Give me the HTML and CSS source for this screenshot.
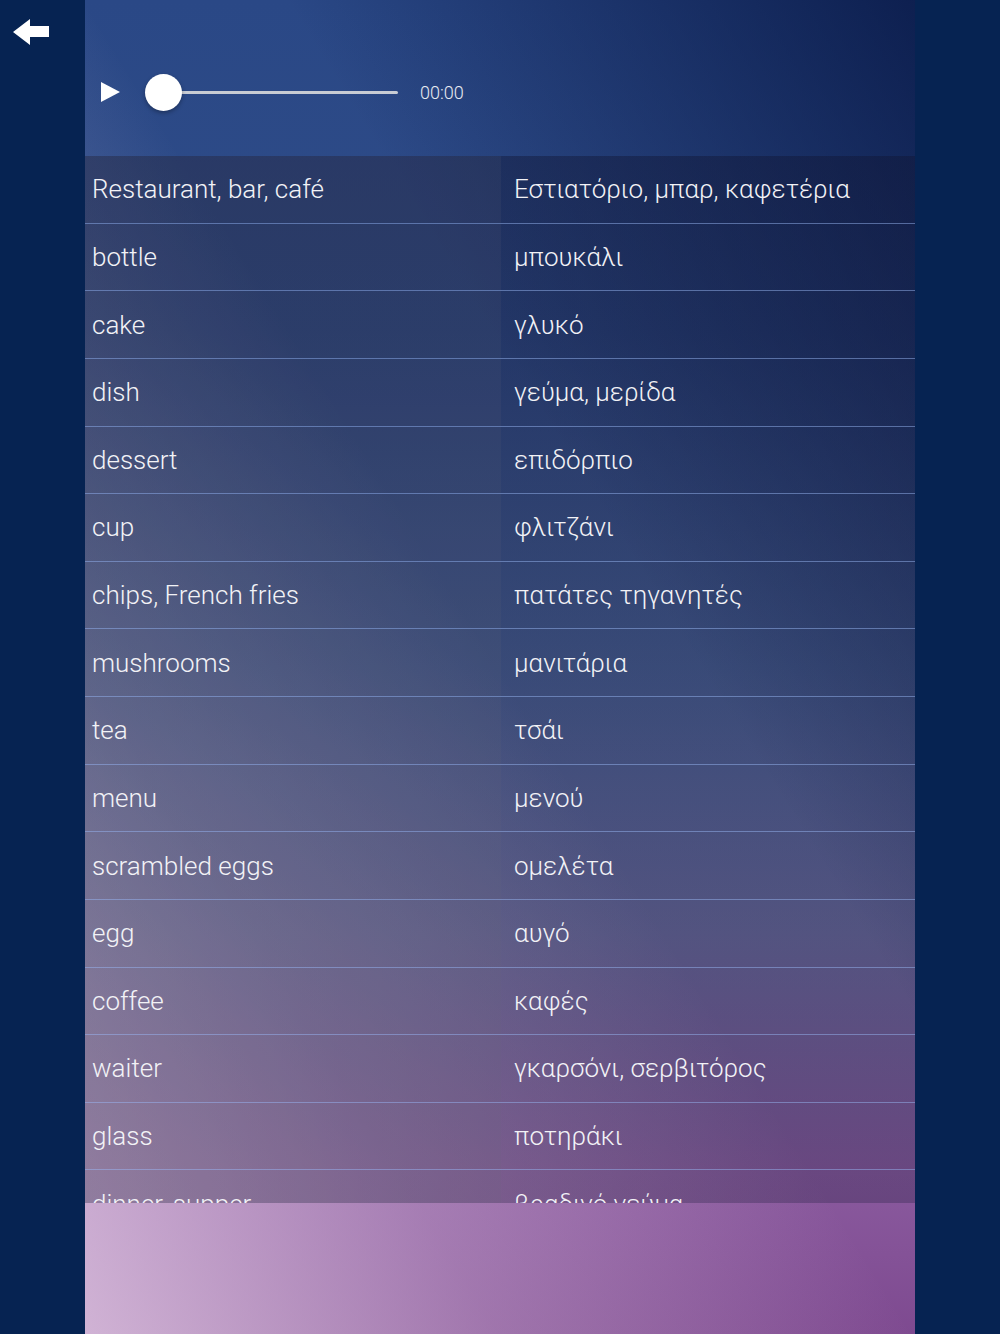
FILE: index.html
```html
<!DOCTYPE html>
<html lang="el">
  <head>
    <meta charset="UTF-8" />
    <meta name="viewport" content="width=device-width, initial-scale=1.0" />
    <title>Restaurant, bar, café</title>
    <link rel="stylesheet" href="styles.css">
  </head>
  <body>
    <aside class="side side-left">
      <!-- back button -->
      <a class="back" href="#">
        <svg width="38" height="28" viewBox="0 0 38 28">
          <polygon points="0,13 17,0 17,7 36,7 36,18 17,18 17,26" fill="#fff" />
        </svg>
      </a>
    </aside>
    <main class="panel">
      <header class="player">
        <span class="play"></span>
        <div class="track">
          <span class="knob"></span>
        </div>
        <span class="time">00:00</span>
      </header>
      <div class="words">
        <ul class="list">
          <li><p>Restaurant, bar, café</p><p>Εστιατόριο, μπαρ, καφετέρια</p></li>
          <li><p>bottle</p><p>μπουκάλι</p></li>
          <li><p>cake</p><p>γλυκό</p></li>
          <li><p>dish</p><p>γεύμα, μερίδα</p></li>
          <li><p>dessert</p><p>επιδόρπιο</p></li>
          <li><p>cup</p><p>φλιτζάνι</p></li>
          <li><p>chips, French fries</p><p>πατάτες τηγανητές</p></li>
          <li><p>mushrooms</p><p>μανιτάρια</p></li>
          <li><p>tea</p><p>τσάι</p></li>
          <li><p>menu</p><p>μενού</p></li>
          <li><p>scrambled eggs</p><p>ομελέτα</p></li>
          <li><p>egg</p><p>αυγό</p></li>
          <li><p>coffee</p><p>καφές</p></li>
          <li><p>waiter</p><p>γκαρσόνι, σερβιτόρος</p></li>
          <li><p>glass</p><p>ποτηράκι</p></li>
          <li><p>dinner, supper</p><p>βραδινό γεύμα</p></li>
        </ul>
      </div>
      <footer class="foot"></footer>
    </main>
    <aside class="side"></aside>
  </body>
</html>
```

FILE: styles.css
```css
html,
body {
  margin: 0;
  padding: 0;
  height: 100%;
}
body {
  display: flex;
  background: #062352;
  font-family: "Roboto", "Liberation Sans", "DejaVu Sans", sans-serif;
  color: #f2f2f6;
  overflow: hidden;
}
.side {
  width: 85px;
  flex-shrink: 0;
  background: #062352;
}
.back {
  display: block;
  padding: 19px 0 0 13px;
}
.panel {
  flex: 1;
  height: 1334px;
  display: flex;
  flex-direction: column;
  background:
    linear-gradient(to bottom left, rgba(4, 18, 62, 0.75) 0%, rgba(4, 18, 62, 0) 38%),
    linear-gradient(to top right, rgba(236, 214, 236, 0.75) 0%, rgba(236, 214, 236, 0.3) 25%, rgba(236, 214, 236, 0) 50%),
    linear-gradient(180deg, #2a4886 0%, #2f4c88 25%, #4a6296 50%, #6c6c9e 70%, #8a5a9e 88%, #7e4a90 100%);
}
/* audio player */
.player {
  height: 156px;
  flex-shrink: 0;
  box-sizing: border-box;
  display: flex;
  align-items: center;
  padding: 28px 0 0 16px;
}
.play {
  width: 0;
  height: 0;
  border-top: 10.5px solid transparent;
  border-bottom: 10.5px solid transparent;
  border-left: 19px solid #fff;
}
.track {
  position: relative;
  width: 235px;
  height: 3px;
  margin-left: 43px;
  background: #c8ccd4;
  border-radius: 2px;
}
.knob {
  position: absolute;
  left: -18px;
  top: -17px;
  width: 37px;
  height: 37px;
  border-radius: 50%;
  background: #fff;
  box-shadow: 0 2px 4px rgba(0, 0, 0, 0.3);
}
.time {
  margin-left: 22px;
  font-size: 18px;
  font-weight: 300;
  color: #e8ebf2;
}
/* word list */
.words {
  height: 1047px;
  flex-shrink: 0;
  overflow: hidden;
  background: linear-gradient(180deg, rgba(16, 20, 50, 0.42) 0%, rgba(22, 26, 58, 0.3) 60%, rgba(30, 28, 60, 0.3) 100%);
}
.list {
  margin: 0;
  padding: 0;
  list-style: none;
}
.list li {
  display: flex;
  height: 67.64px;
  box-sizing: border-box;
  border-bottom: 1.5px solid rgba(150, 180, 240, 0.5);
}
.list p {
  margin: 0;
  display: flex;
  align-items: center;
  font-size: 26px;
  font-weight: 300;
}
.list p:first-child {
  width: 416px;
  padding-left: 7px;
  box-sizing: border-box;
  background: rgba(110, 110, 120, 0.12);
}
.list p:last-child {
  flex: 1;
  padding-left: 13px;
}
.foot {
  flex: 1;
}
```
